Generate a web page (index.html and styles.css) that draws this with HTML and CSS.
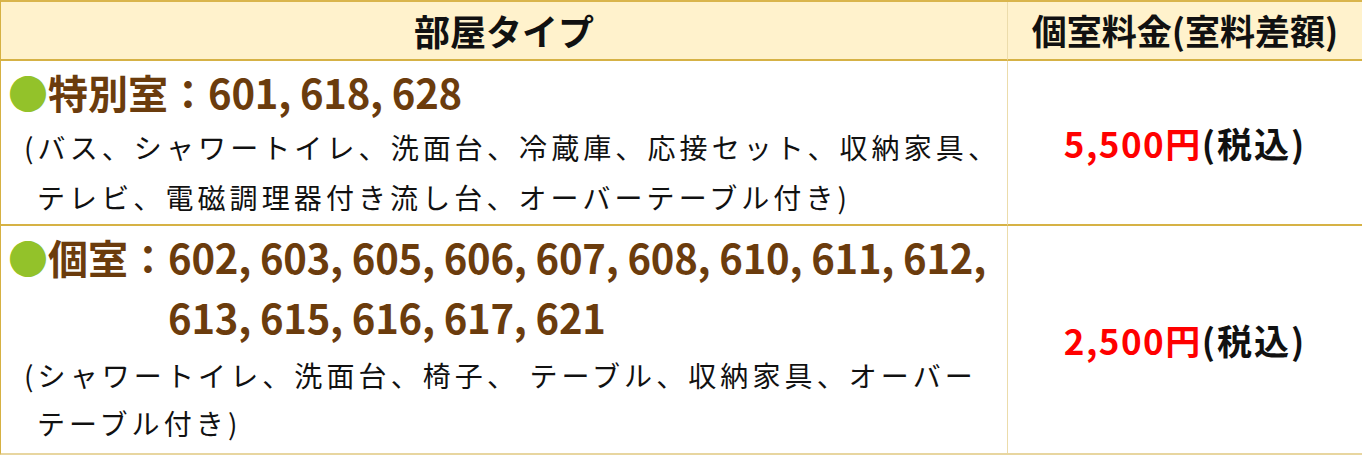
FILE: index.html
```html
<!DOCTYPE html>
<html lang="ja">
<head>
<meta charset="utf-8">
<title>部屋タイプ</title>
<link rel="stylesheet" href="styles.css">
</head>
<body>
<div class="table">
  <div class="cell head head-left">部屋タイプ</div>
  <div class="cell head head-right">個室料金(室料差額)</div>

  <div class="cell type row1">
    <div class="title"><span class="dot">●</span><span class="label">特別室：</span><span class="nums">601, 618, 628</span></div>
    <p class="desc">(バス、シャワートイレ、洗面台、冷蔵庫、応接セット、収納家具、<br>テレビ、電磁調理器付き流し台、オーバーテーブル付き)</p>
  </div>
  <div class="cell price row1"><span class="yen">5,500円</span><span class="tax">(税込)</span></div>

  <div class="cell type row2">
    <div class="title"><span class="dot">●</span><span class="label">個室：</span><span class="nums">602, 603, 605, 606, 607, 608, 610, 611, 612,<br>613, 615, 616, 617, 621</span></div>
    <p class="desc">(シャワートイレ、洗面台、椅子、 テーブル、収納家具、オーバー<br>テーブル付き)</p>
  </div>
  <div class="cell price row2 last"><span class="yen">2,500円</span><span class="tax">(税込)</span></div>
</div>
</body>
</html>
```

FILE: styles.css
```css
html, body {
  margin: 0;
  padding: 0;
  background: #ffffff;
}

body {
  font-family: "Noto Sans CJK JP", "Noto Sans", sans-serif;
  color: #111111;
}

.table {
  display: grid;
  grid-template-columns: 1007px 354px;
  grid-template-rows: 59px 165px 227px;
  width: 1361px;
  border-top: 2px solid #d9b54c;
  border-left: 1px solid #d6b142;
  border-right: 1px solid #e8d6a0;
  border-bottom: 2px solid #e8d6a0;
}

.cell {
  box-sizing: border-box;
  border-bottom: 2px solid #d6b245;
  overflow: hidden;
}

.cell.last,
.cell.row2 {
  border-bottom: none;
}

.head-left,
.type {
  border-right: 1px solid #ecdcab;
}

.head {
  background: #fff2cc;
  display: flex;
  align-items: center;
  justify-content: center;
  font-weight: 700;
  color: #111111;
  padding-bottom: 2px;
}

.head-left {
  font-size: 36px;
}

.head-right {
  font-size: 35px;
}

.type {
  padding: 1px 0 0 7px;
}

.title {
  display: flex;
  align-items: flex-start;
  font-size: 40px;
  line-height: 60px;
  font-weight: 700;
  color: #6b3c0d;
  white-space: nowrap;
}

.dot,
.label {
  flex-shrink: 0;
}

.dot {
  color: #93c22a;
  font-weight: 400;
}

.nums {
  letter-spacing: -0.2px;
}

.desc {
  margin: 0;
  font-size: 28px;
  line-height: 50px;
  letter-spacing: 4.1px;
  color: #111111;
  padding-left: 29px;
  text-indent: -13px;
  white-space: nowrap;
}

.row2 .desc {
  margin-top: 4px;
  line-height: 48px;
}

.price {
  display: flex;
  align-items: center;
  justify-content: center;
  font-weight: 700;
  font-size: 35px;
}

.yen {
  color: #ff0000;
  letter-spacing: 1.5px;
}

.tax {
  color: #111111;
  letter-spacing: 2px;
}
```
